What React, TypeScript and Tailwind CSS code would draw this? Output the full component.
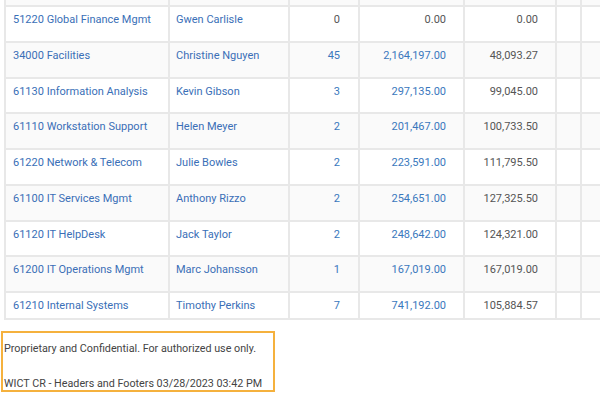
import React from "react";

type Row = { dept: string; name: string; count: string; total: string; avg: string };

const rows: Row[] = [
  { dept: "51220 Global Finance Mgmt", name: "Gwen Carlisle", count: "0", total: "0.00", avg: "0.00" },
  { dept: "34000 Facilities", name: "Christine Nguyen", count: "45", total: "2,164,197.00", avg: "48,093.27" },
  { dept: "61130 Information Analysis", name: "Kevin Gibson", count: "3", total: "297,135.00", avg: "99,045.00" },
  { dept: "61110 Workstation Support", name: "Helen Meyer", count: "2", total: "201,467.00", avg: "100,733.50" },
  { dept: "61220 Network & Telecom", name: "Julie Bowles", count: "2", total: "223,591.00", avg: "111,795.50" },
  { dept: "61100 IT Services Mgmt", name: "Anthony Rizzo", count: "2", total: "254,651.00", avg: "127,325.50" },
  { dept: "61120 IT HelpDesk", name: "Jack Taylor", count: "2", total: "248,642.00", avg: "124,321.00" },
  { dept: "61200 IT Operations Mgmt", name: "Marc Johansson", count: "1", total: "167,019.00", avg: "167,019.00" },
  { dept: "61210 Internal Systems", name: "Timothy Perkins", count: "7", total: "741,192.00", avg: "105,884.57" },
];

const cell = "border-r-2 border-[#e8e8e8] pt-[6px] leading-[13px] whitespace-nowrap";

function TableRow({ r, i, last }: { r: Row; i: number; last: boolean }) {
  const zero = r.count === "0";
  const bg = i % 2 === 1 ? "bg-[#fafafa]" : "bg-white";
  return (
    <div className={`flex border-b-2 border-[#e8e8e8] ${bg} ${last ? "h-[27px]" : "h-[35.75px]"}`}>
      <div className={`${cell} w-[164px] pl-[7px] text-[#3a6fb7]`}>{r.dept}</div>
      <div className={`${cell} w-[120px] pl-[6px] text-[#3a6fb7]`}>{r.name}</div>
      <div className={`${cell} w-[70px] pr-[18px] text-right ${zero ? "text-[#555]" : "text-[#3a78bd]"}`}>{r.count}</div>
      <div className={`${cell} w-[105px] pr-[17px] text-right ${zero ? "text-[#555]" : "text-[#3a78bd]"}`}>{r.total}</div>
      <div className={`${cell} w-[92px] pr-[17px] text-right text-[#555]`}>{r.avg}</div>
      <div className={`${cell} w-[25px]`}></div>
      <div className={`${cell} w-[30px]`}></div>
    </div>
  );
}

export default function App() {
  return (
    <div
      className="w-[600px] h-[399px] overflow-hidden bg-white text-[11px]"
      style={{ fontFamily: "Roboto, 'Liberation Sans', sans-serif" }}
    >
      <div className="ml-[4px] border-l-2 border-[#e8e8e8] w-[640px]">
        <div className="flex h-[7px] border-b-2 border-[#e8e8e8] bg-[#fafafa]">
          <div className="w-[164px] border-r-2 border-[#e8e8e8]"></div>
          <div className="w-[120px] border-r-2 border-[#e8e8e8]"></div>
          <div className="w-[70px] border-r-2 border-[#e8e8e8]"></div>
          <div className="w-[105px] border-r-2 border-[#e8e8e8]"></div>
          <div className="w-[92px] border-r-2 border-[#e8e8e8]"></div>
          <div className="w-[25px] border-r-2 border-[#e8e8e8]"></div>
          <div className="w-[30px] border-r-2 border-[#e8e8e8]"></div>
        </div>
        {rows.map((r, i) => (
          <TableRow key={r.dept} r={r} i={i} last={i === rows.length - 1} />
        ))}
      </div>
      <div className="ml-[1px] mt-[11px] w-[274px] h-[61px] border-2 border-[#f5b13d] pl-[1px] pt-[9px] text-[#444] text-[10.75px] leading-[13px]">
        <div>Proprietary and Confidential. For authorized use only.</div>
        <div className="mt-[22px]">WICT CR - Headers and Footers 03/28/2023 03:42 PM</div>
      </div>
    </div>
  );
}
